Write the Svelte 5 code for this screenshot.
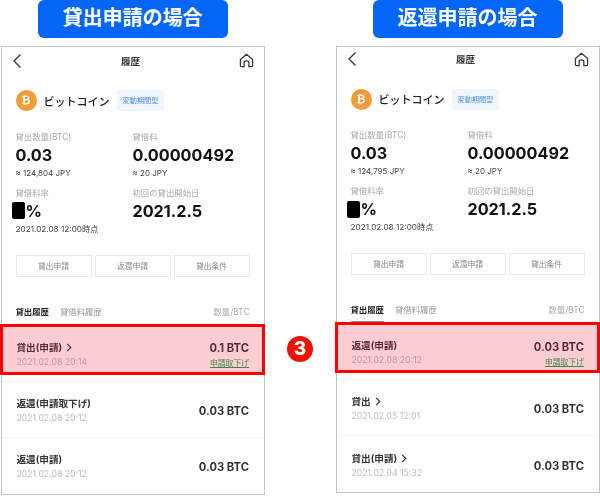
<script>
  const panels = [
    {
      title: "貸出申請の場合",
      lower: true,
      amount: "≈ 124,804 JPY",
      rows: [
        { label: "貸出(申請)", arrow: true, date: "2021.02.08 20:14", value: "0.1 BTC", cancel: true },
        { label: "返還(申請取下げ)", date: "2021.02.08 20:12", value: "0.03 BTC" },
        { label: "返還(申請)", date: "2021.02.08 20:12", value: "0.03 BTC" }
      ]
    },
    {
      title: "返還申請の場合",
      lower: false,
      amount: "≈ 124,795 JPY",
      rows: [
        { label: "返還(申請)", date: "2021.02.08 20:12", value: "0.03 BTC", cancel: true },
        { label: "貸出", arrow: true, date: "2021.02.05 12:01", value: "0.03 BTC" },
        { label: "貸出(申請)", arrow: true, date: "2021.02.04 15:32", value: "0.03 BTC" }
      ]
    }
  ];
  const actions = ["貸出申請", "返還申請", "貸出条件"];
</script>

{#snippet panel(p)}
  <section class="column">
    <h1 class="title">{p.title}</h1>
    <div class="phone" class:lower={p.lower}>
      <header class="nav">
        <svg class="back" viewBox="0 0 10 16" width="10" height="16">
          <path d="M8.5 1.5 L2 8 L8.5 14.5" />
        </svg>
        <span class="nav-title">履歴</span>
        <svg class="home" viewBox="0 0 16 16" width="15" height="15">
          <path d="M1.5 7 L8 1.5 L14.5 7 V13.2 Q14.5 14.5 13.2 14.5 H10.5 V10 Q10.5 8.5 8 8.5 Q5.5 8.5 5.5 10 V14.5 H2.8 Q1.5 14.5 1.5 13.2 Z" />
        </svg>
      </header>

      <div class="coin">
        <span class="coin-icon">₿</span>
        <span class="coin-name">ビットコイン</span>
        <span class="badge">変動期間型</span>
      </div>

      <div class="stats">
        <div class="stat">
          <span class="stat-label">貸出数量(BTC)</span>
          <span class="stat-value">0.03</span>
          <span class="stat-note">{p.amount}</span>
        </div>
        <div class="stat">
          <span class="stat-label">貸借料</span>
          <span class="stat-value">0.00000492</span>
          <span class="stat-note">≈ 20 JPY</span>
        </div>
        <div class="stat">
          <span class="stat-label">貸借料率</span>
          <span class="stat-value rate"><span class="redacted"></span>%</span>
          <span class="stat-note stamp">2021.02.08 12:00時点</span>
        </div>
        <div class="stat">
          <span class="stat-label">初回の貸出開始日</span>
          <span class="stat-value">2021.2.5</span>
        </div>
      </div>

      <div class="actions">
        {#each actions as action}
          <span class="action">{action}</span>
        {/each}
      </div>

      <div class="tabs">
        <span class="tab active">貸出履歴</span>
        <span class="tab">貸借料履歴</span>
        <span class="unit">数量/BTC</span>
      </div>

      <ul class="rows">
        {#each p.rows as row, i}
          <li class="row">
            <div class="row-left">
              <span class="row-label">
                {row.label}
                {#if row.arrow}
                  <svg class="chevron" viewBox="0 0 6 10" width="6" height="9">
                    <path d="M1 1 L5 5 L1 9" />
                  </svg>
                {/if}
              </span>
              <span class="row-date">{row.date}</span>
            </div>
            <div class="row-right">
              <span class="row-value">{row.value}</span>
              {#if row.cancel}
                <span class="cancel">申請取下げ</span>
              {/if}
            </div>
            {#if i === 0}
              <div class="highlight"></div>
            {/if}
          </li>
        {/each}
      </ul>
    </div>
  </section>
{/snippet}

<main class="page">
  {@render panel(panels[0])}
  <div class="gutter"><span class="step">3</span></div>
  {@render panel(panels[1])}
</main>

<style>
  :global(body) {
    margin: 0;
    background: #fff;
  }
  .page {
    display: flex;
    width: 600px;
    height: 496px;
    overflow: hidden;
    font-family: Inter, "Noto Sans CJK JP", sans-serif;
    color: #222;
    filter: blur(0.3px);
  }
  .column {
    width: 265px;
    display: flex;
    flex-direction: column;
    align-items: center;
    gap: 8px;
  }
  .gutter {
    flex: 1;
    display: flex;
    justify-content: center;
    padding-top: 336px;
  }
  .step {
    width: 26px;
    height: 26px;
    border-radius: 50%;
    background: #f01000;
    color: #fff;
    font-size: 19px;
    font-weight: 800;
    line-height: 26px;
    text-align: center;
  }
  .title {
    margin: 0;
    width: 190px;
    height: 38px;
    border-radius: 6px;
    background: #0466f6;
    color: #fff;
    font-size: 20px;
    font-weight: 700;
    line-height: 36px;
    text-align: center;
  }
  .phone {
    box-sizing: border-box;
    width: 264px;
    height: 447px;
    border: 1.5px solid #c4c4c4;
    padding: 0 14px;
    flex: none;
  }
  .phone.lower {
    height: 449px;
    padding-top: 1.5px;
  }
  .nav {
    display: flex;
    align-items: center;
    justify-content: space-between;
    height: 24px;
  }
  .back {
    margin-left: -4px;
  }
  .back path,
  .home path,
  .chevron path {
    fill: none;
    stroke: #333;
    stroke-width: 1.3;
  }
  .nav-title {
    font-size: 9.5px;
    font-weight: 700;
    color: #333;
  }
  .home {
    margin-right: -5px;
  }
  .coin {
    display: flex;
    align-items: center;
    height: 22px;
    margin-top: 17px;
  }
  .coin-icon {
    width: 21px;
    height: 21px;
    border-radius: 50%;
    background: #f09c38;
    color: #fff;
    font-family: "DejaVu Sans", sans-serif;
    font-size: 11px;
    font-weight: 700;
    line-height: 21px;
    text-align: center;
  }
  .coin-name {
    margin-left: 7px;
    font-size: 11px;
    font-weight: 500;
  }
  .badge {
    margin-left: 7px;
    padding: 0 6px;
    height: 21px;
    background: #f1f6fe;
    color: #4f8fe0;
    font-size: 7.2px;
    line-height: 21px;
    border-radius: 2px;
  }
  .stats {
    display: grid;
    grid-template-columns: 117px 1fr;
    grid-auto-rows: 56px;
    margin-top: 20px;
  }
  .stat {
    display: flex;
    flex-direction: column;
  }
  .stat-label {
    font-size: 8.4px;
    line-height: 11px;
    color: #aaa;
  }
  .stat-value {
    font-size: 16.2px;
    font-weight: 700;
    line-height: 24px;
    color: #111;
  }
  .stat-note {
    font-size: 8px;
    line-height: 12px;
    color: #444;
  }
  .stamp {
    font-size: 8.2px;
  }
  .rate {
    display: flex;
    align-items: center;
    margin-left: -4px;
  }
  .redacted {
    width: 13px;
    height: 17px;
    border-radius: 2px;
    background: #000;
    margin-right: 1px;
  }
  .actions {
    display: grid;
    grid-template-columns: repeat(3, 1fr);
    gap: 3px;
    margin-top: 11px;
  }
  .action {
    height: 22px;
    border: 1px solid #e9e9e9;
    box-sizing: border-box;
    color: #888;
    font-size: 7.8px;
    line-height: 20px;
    text-align: center;
  }
  .tabs {
    display: flex;
    align-items: flex-start;
    height: 46px;
    box-sizing: border-box;
    padding-top: 28px;
    font-size: 8.4px;
    line-height: 14px;
    color: #999;
  }
  .tab {
    height: 18px;
    margin-right: 11px;
  }
  .tab.active {
    font-weight: 700;
    color: #222;
    border-bottom: 1.5px solid #888;
  }
  .lower .tab.active {
    border-bottom-color: transparent;
  }
  .unit {
    margin-left: auto;
    color: #aaa;
  }
  .rows {
    list-style: none;
    margin: 3px -14px 0;
    padding: 0;
  }
  .row {
    position: relative;
    box-sizing: border-box;
    display: flex;
    justify-content: space-between;
    align-items: center;
    height: 56px;
    padding: 3px 14.5px 0 15px;
    border-bottom: 1px solid #f4f4f4;
  }
  .row:last-child {
    border-bottom: 0;
  }
  .row-left,
  .row-right {
    display: flex;
    flex-direction: column;
  }
  .row-right {
    align-items: flex-end;
  }
  .row-label {
    display: flex;
    align-items: center;
    gap: 4px;
    font-size: 9.6px;
    font-weight: 700;
    line-height: 15px;
    color: #333;
  }
  .chevron {
    flex: none;
  }
  .row-date {
    font-size: 8.7px;
    line-height: 15px;
    color: #bbb;
  }
  .row-value {
    font-size: 11.2px;
    font-weight: 700;
    color: #333;
  }
  .cancel {
    margin-top: 3px;
    font-size: 7.8px;
    line-height: 10px;
    color: #1aa35a;
    text-decoration: underline;
  }
  .highlight {
    position: absolute;
    box-sizing: border-box;
    left: -1.5px;
    right: -1.5px;
    top: -2px;
    height: 51px;
    border: 3px solid #ff0000;
    background: rgba(240, 10, 30, 0.2);
  }
</style>
